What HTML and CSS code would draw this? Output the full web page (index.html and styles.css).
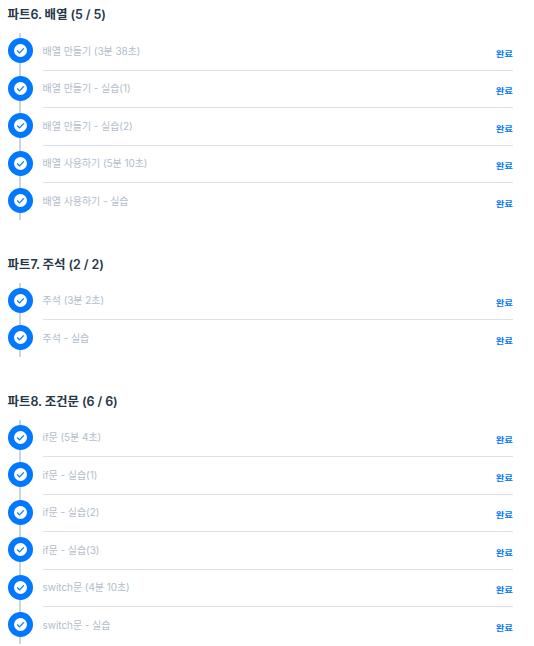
FILE: index.html
```
<!DOCTYPE html>
<html lang="ko">
<head>
    <meta charset="UTF-8">
    <meta name="viewport" content="width=device-width, initial-scale=1.0">
    <title>강의 목록</title>
    <link rel="stylesheet" href="styles.css">
</head>
<body>
    <!-- Check icon shared by every lesson -->
    <svg class="hidden">
        <symbol id="check" viewBox="0 0 25 25">
            <circle cx="12.5" cy="12.5" r="12.5" fill="#0078ff"/>
            <circle cx="12.5" cy="12.5" r="6.5" fill="#fff"/>
            <path d="M9.2 12.5l2.3 2.3 4.3-4.4" fill="none" stroke="#0078ff" stroke-width="1.2"/>
        </symbol>
    </svg>

    <section class="part">
        <h2>파트6. 배열 (5 / 5)</h2>
        <ul class="lessons">
            <li><svg class="icon"><use href="#check"/></svg><div class="lesson"><span class="name">배열 만들기 (3분 38초)</span><span class="status">완료</span></div></li>
            <li><svg class="icon"><use href="#check"/></svg><div class="lesson"><span class="name">배열 만들기 - 실습(1)</span><span class="status">완료</span></div></li>
            <li><svg class="icon"><use href="#check"/></svg><div class="lesson"><span class="name">배열 만들기 - 실습(2)</span><span class="status">완료</span></div></li>
            <li><svg class="icon"><use href="#check"/></svg><div class="lesson"><span class="name">배열 사용하기 (5분 10초)</span><span class="status">완료</span></div></li>
            <li><svg class="icon"><use href="#check"/></svg><div class="lesson"><span class="name">배열 사용하기 - 실습</span><span class="status">완료</span></div></li>
        </ul>
    </section>

    <section class="part">
        <h2>파트7. 주석 (2 / 2)</h2>
        <ul class="lessons">
            <li><svg class="icon"><use href="#check"/></svg><div class="lesson"><span class="name">주석 (3분 2초)</span><span class="status">완료</span></div></li>
            <li><svg class="icon"><use href="#check"/></svg><div class="lesson"><span class="name">주석 - 실습</span><span class="status">완료</span></div></li>
        </ul>
    </section>

    <section class="part">
        <h2>파트8. 조건문 (6 / 6)</h2>
        <ul class="lessons">
            <li><svg class="icon"><use href="#check"/></svg><div class="lesson"><span class="name">if문 (5분 4초)</span><span class="status">완료</span></div></li>
            <li><svg class="icon"><use href="#check"/></svg><div class="lesson"><span class="name">if문 - 실습(1)</span><span class="status">완료</span></div></li>
            <li><svg class="icon"><use href="#check"/></svg><div class="lesson"><span class="name">if문 - 실습(2)</span><span class="status">완료</span></div></li>
            <li><svg class="icon"><use href="#check"/></svg><div class="lesson"><span class="name">if문 - 실습(3)</span><span class="status">완료</span></div></li>
            <li><svg class="icon"><use href="#check"/></svg><div class="lesson"><span class="name">switch문 (4분 10초)</span><span class="status">완료</span></div></li>
            <li><svg class="icon"><use href="#check"/></svg><div class="lesson"><span class="name">switch문 - 실습</span><span class="status">완료</span></div></li>
        </ul>
    </section>
</body>
</html>
```

FILE: styles.css
```
body {
    font-family: Inter, "Noto Sans CJK KR", sans-serif;
    background-color: #fff;
    color: #263747;
    margin: 0;
    padding: 5.4px 21px 0 7.6px;
}
.hidden {
    display: none;
}
.part {
    margin-bottom: 35.3px;
}
.part:last-child {
    margin-bottom: 0;
}
h2 {
    font-size: 12.5px;
    font-weight: 600;
    line-height: 20px;
    letter-spacing: -0.1px;
    margin: 0 0 7.7px;
}
.lessons {
    list-style: none;
    margin: 0 0 0 0.4px;
    padding: 0;
    background: linear-gradient(#cbd5e0, #cbd5e0) 11px 0 / 2px 100% no-repeat;
}
.lessons li {
    display: flex;
    height: 37.5px;
}
.lessons li:last-child {
    height: 36.5px;
}
.icon {
    width: 25px;
    height: 25px;
    margin: 5px 10px 0 0;
    flex-shrink: 0;
}
.lesson {
    display: flex;
    flex: 1;
    justify-content: space-between;
    box-sizing: border-box;
    border-bottom: 1px solid #d7e2eb;
}
.lessons li:last-child .lesson {
    border-bottom: none;
}
.name {
    font-size: 10px;
    line-height: 16px;
    letter-spacing: -0.06px;
    color: #b2bdca;
    margin: 9.5px 0 0 -0.4px;
}
.status {
    font-size: 9.4px;
    font-weight: 700;
    line-height: 12px;
    color: #0078ff;
    margin-top: 14.9px;
    transform: scaleY(0.8);
}
```
